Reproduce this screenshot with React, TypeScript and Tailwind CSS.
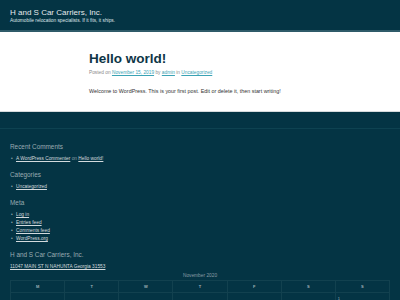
const days = ['M', 'T', 'W', 'T', 'F', 'S', 'S']

const font = { fontFamily: '"Liberation Sans", Arial, sans-serif' }

function Widget({ title, children }: { title: string; children: React.ReactNode }) {
  return (
    <section className="mb-[7px]">
      <h2 className="text-[6.4px] leading-[10px] text-[#9aabb2] mb-[3px]">{title}</h2>
      <ul className="text-[4.8px] leading-[8px] text-[#8a9ca4]">{children}</ul>
    </section>
  )
}

function Item({ children }: { children: React.ReactNode }) {
  return (
    <li className="flex items-center">
      <span className="w-[6px] pl-[1px] text-[#9aabb2]">•</span>
      <span>{children}</span>
    </li>
  )
}

const link = 'text-[#d3dadd] underline'

export default function App() {
  return (
    <div className="w-[400px] h-[300px] overflow-hidden bg-[#043444]" style={font}>
      {/* site header */}
      <header className="h-[32px] px-[10px] pt-[8px] border-b-2 border-[#2f5b69]">
        <h1 className="text-[8px] leading-[10px] text-[#e4e9eb]">H and S Car Carriers, Inc.</h1>
        <p className="text-[4.8px] leading-[6px] text-[#dfe5e8]">
          Automobile relocation specialists. If it fits, it ships.
        </p>
      </header>

      {/* main post */}
      <main className="h-[80px] bg-white border-b border-[#d6dbdd]">
        <article className="w-[222px] mx-auto pt-[19px]">
          <h2 className="text-[13.5px] leading-[16px] font-bold text-[#0e3546]">Hello world!</h2>
          <p className="mt-[2px] text-[4.8px] leading-[8px] text-[#8a8a8a]">
            Posted on <a className="text-[#3aa3b5] underline">November 15, 2019</a> by{' '}
            <a className="text-[#3aa3b5] underline">admin</a> in{' '}
            <a className="text-[#3aa3b5] underline">Uncategorized</a>
          </p>
          <p className="mt-[10px] text-[5.4px] leading-[8px] text-[#333]">
            Welcome to WordPress. This is your first post. Edit or delete it, then start writing!
          </p>
        </article>
      </main>

      {/* footer widgets */}
      <footer>
        <div className="h-[17px] border-b border-[#0e4251]" />
        <div className="px-[10px] pt-[13px]">
          <Widget title="Recent Comments">
            <Item>
              <a className={link}>A WordPress Commenter</a> on <a className={link}>Hello world!</a>
            </Item>
          </Widget>
          <Widget title="Categories">
            <Item>
              <a className={link}>Uncategorized</a>
            </Item>
          </Widget>
          <Widget title="Meta">
            <Item><a className={link}>Log in</a></Item>
            <Item><a className={link}>Entries feed</a></Item>
            <Item><a className={link}>Comments feed</a></Item>
            <Item><a className={link}>WordPress.org</a></Item>
          </Widget>
          <h2 className="mt-[1px] text-[6.4px] leading-[10px] text-[#9aabb2] mb-[3px]">H and S Car Carriers, Inc.</h2>
          <p className="text-[4.8px] leading-[8px]">
            <a className={link}>11047 MAIN ST N NAHUNTA Georgia 31553</a>
          </p>

          <table className="w-full mt-[1px] border-collapse table-fixed text-[4px] text-[#9fb0b7]">
            <caption className="text-[4.8px] leading-[8px] text-[#8a9ca4]">November 2020</caption>
            <thead>
              <tr className="h-[12px]">
                {days.map((d, i) => (
                  <th key={i} className="border border-[#12414f] font-bold text-center">
                    {d}
                  </th>
                ))}
              </tr>
            </thead>
            <tbody>
              <tr className="h-[12px]">
                {days.map((_, i) => (
                  <td key={i} className="border border-[#12414f] pl-[2px] align-top pt-[3px]">
                    {i === 6 ? '1' : ''}
                  </td>
                ))}
              </tr>
            </tbody>
          </table>
        </div>
      </footer>
    </div>
  )
}
